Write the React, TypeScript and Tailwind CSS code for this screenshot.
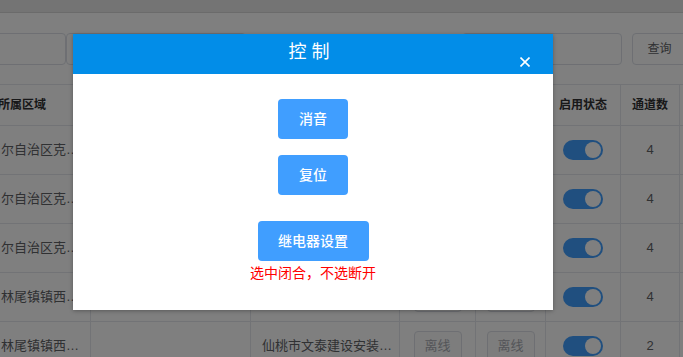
const rows = [
  { area: "尔自治区克…", company: "", count: 4 },
  { area: "尔自治区克…", company: "", count: 4 },
  { area: "尔自治区克…", company: "", count: 4 },
  { area: "林尾镇镇西…", company: "", count: 4 },
  { area: "林尾镇镇西…", company: "仙桃市文泰建设安装…", count: 2 },
];

function Toggle() {
  return (
    <div className="flex h-[20px] w-[40px] items-center justify-end rounded-full bg-[#409eff] p-[2px]">
      <div className="h-[16px] w-[16px] rounded-full bg-white" />
    </div>
  );
}

function OfflineBtn() {
  return (
    <div className="flex h-[30px] w-[48px] items-center justify-center rounded-[4px] border border-[#dcdfe6] bg-[#fafafa] text-[13px] text-[#a8abb2]">
      离线
    </div>
  );
}

export default function App() {
  const cell = "border-r border-b border-[#e4e7ed] flex items-center";
  return (
    <div className="relative h-[357px] w-[683px] overflow-hidden bg-white font-['Liberation_Sans','Noto_Sans_CJK_SC',sans-serif] text-[#606266]">
      {/* page behind the dialog */}
      <div className="h-[13px] border-b border-[#d6d6d6] bg-[#e9e9e9]" />

      <div className="mt-[20px] flex h-[32px]">
        <div className="-ml-[10px] w-[76px] shrink-0 rounded-[4px] border border-[#dcdfe6]" />
        <div className="ml-[0px] w-[180px] shrink-0 rounded-[4px] border border-[#dcdfe6]" />
        <div className="flex-1" />
        <div className="w-[160px] shrink-0 rounded-[4px] border border-[#dcdfe6]" />
        <div className="-mr-[4px] ml-[10px] flex w-[55px] shrink-0 items-center justify-center rounded-[4px] border border-[#dcdfe6] text-[12px] text-[#606266]">
          查询
        </div>
      </div>

      <div className="mt-[19px] grid grid-cols-[91px_160px_149px_76px_70px_75px_59px_1fr] border-t border-[#e4e7ed]">
        <div className={`${cell} h-[41px] text-[12px] font-bold text-[#303133]`}>
          <span className="-ml-[2px]">所属区域</span>
        </div>
        <div className={`${cell} h-[41px]`} />
        <div className={`${cell} h-[41px]`} />
        <div className={`${cell} h-[41px]`} />
        <div className={`${cell} h-[41px]`} />
        <div className={`${cell} h-[41px] justify-center text-[12px] font-bold text-[#303133]`}>启用状态</div>
        <div className={`${cell} h-[41px] justify-center text-[12px] font-bold text-[#303133]`}>通道数</div>
        <div className="h-[41px] border-b border-[#e4e7ed]" />

        {rows.map((r, i) => (
          <div key={i} className="contents">
            <div className={`${cell} h-[49px] whitespace-nowrap pl-[1px] text-[13px]`}>{r.area}</div>
            <div className={`${cell} h-[49px]`} />
            <div className={`${cell} h-[49px] whitespace-nowrap pl-[11px] text-[13px]`}>{r.company}</div>
            <div className={`${cell} h-[49px] justify-center`}>
              <OfflineBtn />
            </div>
            <div className={`${cell} h-[49px] justify-center`}>
              <OfflineBtn />
            </div>
            <div className={`${cell} h-[49px] justify-center`}>
              <Toggle />
            </div>
            <div className={`${cell} h-[49px] justify-center text-[13px]`}>{r.count}</div>
            <div className="h-[49px] border-b border-[#e4e7ed]" />
          </div>
        ))}
      </div>

      {/* mask */}
      <div className="absolute inset-0 bg-black/50" />

      {/* dialog */}
      <div className="absolute left-[73px] top-[34px] flex h-[276px] w-[480px] flex-col bg-white shadow-[0_1px_4px_rgba(0,0,0,0.3)]">
        <div className="relative flex h-[40px] shrink-0 items-center justify-center bg-[#028de8] pb-[3px] pr-[8px]">
          <span className="text-[18px] text-white">控 制</span>
          <svg className="absolute right-[23px] top-[23px]" width="10" height="10" viewBox="0 0 10 10">
            <path d="M0.5 0.5L9.5 9.5M9.5 0.5L0.5 9.5" stroke="white" strokeWidth="1.6" />
          </svg>
        </div>
        <div className="flex flex-col items-center pt-[25px]">
          <div className="flex h-[40px] w-[70px] items-center justify-center rounded-[4px] bg-[#409eff] text-[14px] font-medium text-white">
            消音
          </div>
          <div className="mt-[16px] flex h-[40px] w-[70px] items-center justify-center rounded-[4px] bg-[#409eff] text-[14px] font-medium text-white">
            复位
          </div>
          <div className="mt-[26px] flex h-[40px] w-[111px] items-center justify-center rounded-[4px] bg-[#409eff] text-[14px] font-medium text-white">
            继电器设置
          </div>
          <div className="mt-[2px] text-[14px] leading-[20px] text-[#ff0000]">选中闭合，不选断开</div>
        </div>
      </div>
    </div>
  );
}
